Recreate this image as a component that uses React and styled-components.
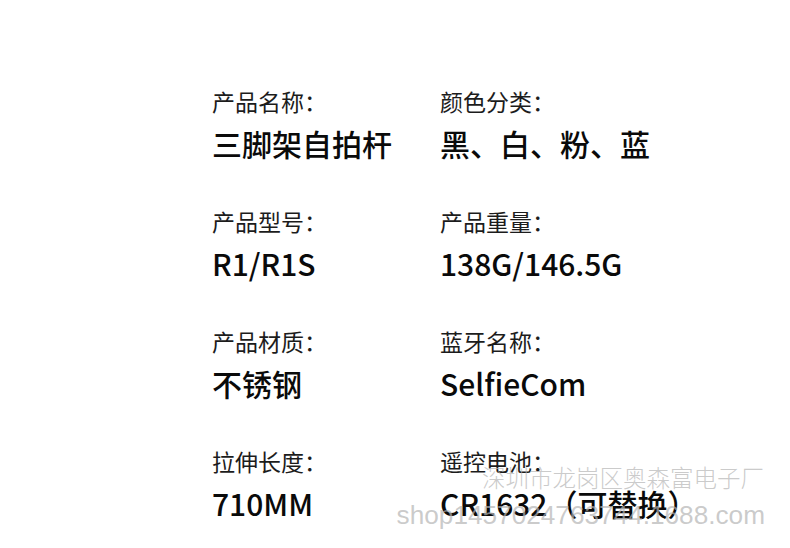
import React from 'react';
import styled, { createGlobalStyle } from 'styled-components';

const GlobalStyle = createGlobalStyle`
	html, body {
		margin: 0;
		padding: 0;
		background: #fff;
	}
	body {
		font-family: "Noto Sans CJK SC", "Noto Sans", sans-serif;
	}
`;

const specs = [
	{ label: '产品名称：', value: '三脚架自拍杆' },
	{ label: '颜色分类：', value: '黑、白、粉、蓝' },
	{ label: '产品型号：', value: 'R1/R1S' },
	{ label: '产品重量：', value: '138G/146.5G' },
	{ label: '产品材质：', value: '不锈钢' },
	{ label: '蓝牙名称：', value: 'SelfieCom' },
	{ label: '拉伸长度：', value: '710MM' },
	{ label: '遥控电池：', value: 'CR1632（可替换）' },
];

const App = () => {
	return (
		<>
			<GlobalStyle />
			<Page>
				<SpecGrid>
					{specs.map((item) => (
						<Spec key={item.label}>
							<Label>{item.label}</Label>
							<Value>{item.value}</Value>
						</Spec>
					))}
				</SpecGrid>
				<Watermark $top={466} $right={26} $size={23.5}>深圳市龙岗区奥森富电子厂</Watermark>
				<Watermark $top={502} $right={25} $size={26.2} $latin>shop1457024763744.1688.com</Watermark>
			</Page>
		</>
	);
};

const Page = styled.div`
	position: relative;
	width: 790px;
	height: 548px;
	box-sizing: border-box;
	padding: 90px 0 0 212px;
	overflow: hidden;
	background: #fff;
`;

const SpecGrid = styled.div`
	display: grid;
	grid-template-columns: 228px auto;
	row-gap: 52px;
`;

const Spec = styled.div`
	display: flex;
	flex-direction: column;
	gap: 15px;
`;

const Label = styled.div`
	font-size: 23px;
	line-height: 23px;
	font-weight: 400;
	color: #1c1c1c;
	white-space: nowrap;
`;

const Value = styled.div`
	font-size: 30px;
	line-height: 30px;
	font-weight: 500;
	color: #0a0a0a;
	white-space: nowrap;
`;

const Watermark = styled.div`
	position: absolute;
	top: ${(p) => p.$top}px;
	right: ${(p) => p.$right}px;
	font-family: ${(p) =>
		p.$latin ? '"Liberation Sans", Arial, sans-serif' : '"Noto Sans CJK SC", sans-serif'};
	font-size: ${(p) => p.$size}px;
	line-height: 1;
	font-weight: 300;
	color: rgba(180, 180, 180, 0.7);
	white-space: nowrap;
	pointer-events: none;
`;

export default App;
